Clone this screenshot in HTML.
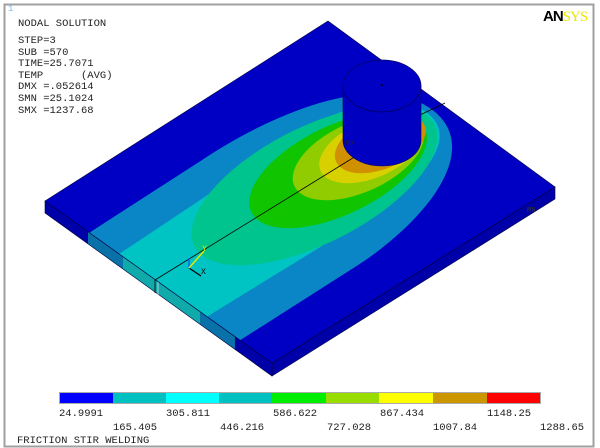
<!DOCTYPE html>
<html><head><meta charset="utf-8"><style>
html,body{margin:0;padding:0;background:#fff;width:600px;height:448px;overflow:hidden}
svg{display:block}
text{font-family:"Liberation Mono",monospace;font-size:10.5px;fill:#222;white-space:pre}
</style></head><body>
<svg width="600" height="448" viewBox="0 0 600 448">
<rect x="0" y="0" width="600" height="448" fill="#fff"/>
<rect x="4.5" y="4.5" width="589" height="442" fill="none" stroke="#a0a0a0" stroke-width="2"/>
<text x="8" y="11" style="fill:#7ab8f0;font-size:9px">1</text>
<text x="18" y="26">NODAL SOLUTION</text>
<text x="18" y="43">STEP=3</text>
<text x="18" y="55">SUB =570</text>
<text x="18" y="66">TIME=25.7071</text>
<text x="18" y="78" xml:space="preserve">TEMP      (AVG)</text>
<text x="18" y="89">DMX =.052614</text>
<text x="18" y="101">SMN =25.1024</text>
<text x="18" y="113">SMX =1237.68</text>
<text x="543" y="21" style="font-family:'Liberation Sans',sans-serif;font-weight:bold;font-size:15px;fill:#000;letter-spacing:-1px">AN<tspan style="fill:#e8e800;font-weight:normal;font-family:'Liberation Serif',serif">SYS</tspan></text>
<defs>
<clipPath id="top"><polygon points="328,21 555,187 272,363 45,201"/></clipPath>
<clipPath id="front"><polygon points="45,201 272,363 272,376 45,213"/></clipPath>
</defs>
<polygon points="272,363 555,187 555,199 272,376" fill="#0000a8" stroke="#000040" stroke-width="0.6"/>
<g clip-path="url(#front)">
<rect x="40" y="190" width="240" height="200" fill="#0000a8"/>
<polygon points="88,190 235,190 235,400 88,400" fill="#0872a8"/>
<polygon points="123,190 200,190 200,400 123,400" fill="#10aaaa"/>
</g>
<polygon points="45,201 272,363 272,376 45,213" fill="none" stroke="#000040" stroke-width="0.6"/>
<line x1="155" y1="280" x2="155" y2="293" stroke="#000" stroke-width="0.8"/>
<line x1="158" y1="282" x2="158" y2="295" stroke="#ddd" stroke-width="0.8"/>
<polygon points="328,21 555,187 272,363 45,201" fill="#0000c4"/>
<g clip-path="url(#top)">
<g transform="matrix(-0.844,0.537,0.814,0.581,382,140)">
<path d="M-58,0 C-58,-65 40,-88 130,-86 L420,-84 L420,100 L130,100 C40,100 -58,65 -58,0Z" fill="#0a86c6"/>
<path d="M-52,0 C-52,-50 30,-62 110,-52 L420,-45 L420,57 L110,62 C30,66 -52,50 -52,0Z" fill="#00c4c4"/>
<ellipse cx="82" cy="2" rx="132" ry="64" fill="#00c48e"/>
<ellipse cx="54" cy="2" rx="94" ry="49" fill="#10c400"/>
<ellipse cx="30" cy="2" rx="68" ry="39" fill="#90cc00"/>
<ellipse cx="15" cy="2" rx="53" ry="32" fill="#d8d000"/>
<ellipse cx="4" cy="2" rx="46" ry="29" fill="#d09000"/>
</g>
</g>
<polygon points="328,21 555,187 272,363 45,201" fill="none" stroke="#000040" stroke-width="0.6"/>
<line x1="382" y1="140" x2="155" y2="280" stroke="#000" stroke-width="0.8"/>
<line x1="420" y1="115" x2="445" y2="103" stroke="#000" stroke-width="0.7"/>
<text x="527" y="212" style="font-size:7px;fill:#333">MN</text>
<path d="M343,86 L343,140 A39,26 0 0 0 421,140 L421,86 Z" fill="#0000c0" stroke="#000060" stroke-width="0.6"/>
<ellipse cx="382" cy="86" rx="39" ry="26" fill="#0000c4" stroke="#000060" stroke-width="0.7"/>
<path d="M345,94 A39,26 0 0 0 419,94" fill="none" stroke="#000060" stroke-width="0.5"/>
<circle cx="382" cy="85" r="1" fill="#000"/>
<text x="346" y="145" style="font-size:7px;fill:#222">MX</text>
<polyline points="189,258 189,268" fill="none" stroke="#0050ff" stroke-width="1.2"/>
<line x1="189" y1="268" x2="201" y2="276" stroke="#000" stroke-width="1.2"/>
<line x1="189" y1="268" x2="204" y2="251" stroke="#e8e800" stroke-width="1.5"/>
<text x="202" y="251" style="font-size:8px;fill:#e8e800">Y</text>
<text x="201" y="274" style="font-size:8px;fill:#000">X</text>
<rect x="59" y="392" width="482" height="12" fill="#aaa"/>
<rect x="60" y="393" width="53" height="10" fill="#0000ff"/>
<rect x="113" y="393" width="53" height="10" fill="#00c0c0"/>
<rect x="166" y="393" width="53" height="10" fill="#00ffff"/>
<rect x="219" y="393" width="53" height="10" fill="#00c0c0"/>
<rect x="272" y="393" width="54" height="10" fill="#00ee00"/>
<rect x="326" y="393" width="53" height="10" fill="#99dd00"/>
<rect x="379" y="393" width="54" height="10" fill="#ffff00"/>
<rect x="433" y="393" width="54" height="10" fill="#cc9600"/>
<rect x="487" y="393" width="53" height="10" fill="#ff0000"/>
<text x="59" y="416">24.9991</text>
<text x="166" y="416">305.811</text>
<text x="273" y="416">586.622</text>
<text x="380" y="416">867.434</text>
<text x="487" y="416">1148.25</text>
<text x="113" y="430">165.405</text>
<text x="220" y="430">446.216</text>
<text x="327" y="430">727.028</text>
<text x="433" y="430">1007.84</text>
<text x="540" y="430">1288.65</text>
<text x="17" y="443">FRICTION STIR WELDING</text>
</svg>
</body></html>
